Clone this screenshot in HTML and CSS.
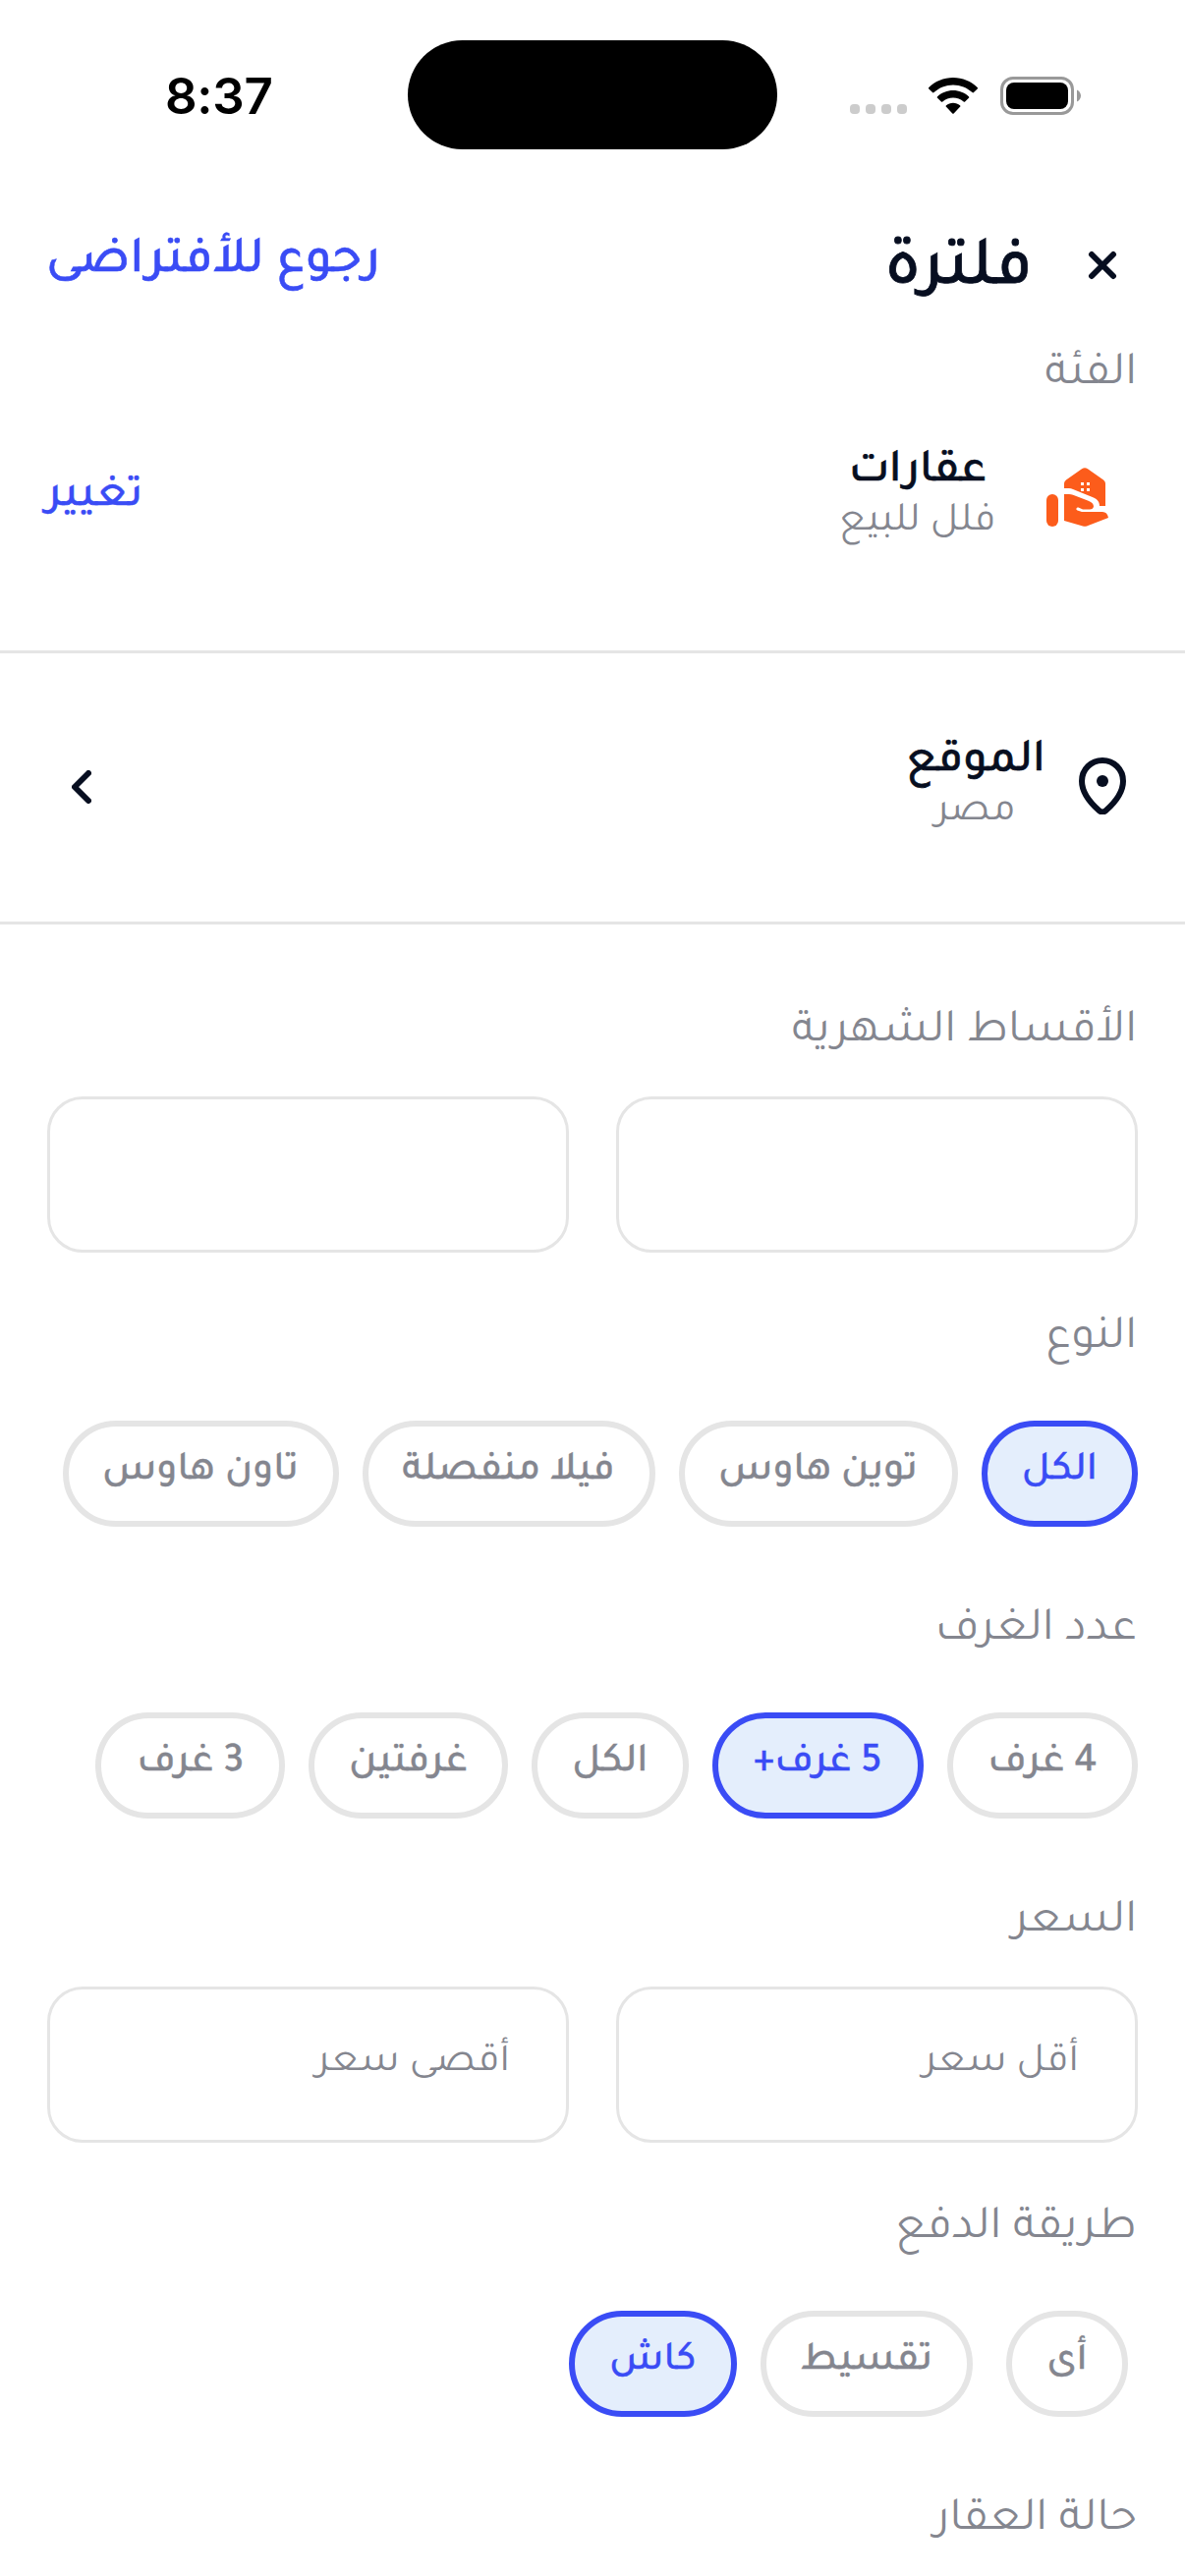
FILE: index.html
```html
<!DOCTYPE html>
<html lang="ar" dir="rtl">
<head>
<meta charset="utf-8">
<title>فلترة</title>
<link rel="stylesheet" href="styles.css">
</head>
<body>
<header class="status" dir="ltr">
  <div class="time">8:37</div>
  <div class="island"></div>
  <div class="indicators">
    <svg class="dots" width="58" height="10" viewBox="0 0 58 10" fill="#cccccc"><rect width="10" height="10" rx="4"/><rect x="16" width="10" height="10" rx="4"/><rect x="32" width="10" height="10" rx="4"/><rect x="48" width="10" height="10" rx="4"/></svg>
    <svg class="wifi" width="50" height="37" viewBox="0 0 50 37"><path d="M25 0C34.600 0 43.400 3.700 49.700 10a1 1 0 0 1 0 1.400L46 15.100a1 1 0 0 1-1.500 0C39.300 10.200 32.500 7.400 25 7.400S10.700 10.200 5.500 15.100a1 1 0 0 1-1.500 0L.300 11.400a1 1 0 0 1 0-1.400C6.600 3.700 15.400 0 25 0zM25 13c6 0 11.600 2.300 15.900 6.200a1 1 0 0 1 0 1.500l-3.800 3.800a1 1 0 0 1-1.400 0C32.800 21.900 29.100 20.400 25 20.400s-7.800 1.500-10.700 4.100a1 1 0 0 1-1.400 0l-3.800-3.800a1 1 0 0 1 0-1.500C13.400 15.300 19 13 25 13zM25 25.700c2.700 0 5.100 1 7 2.600a1 1 0 0 1 0 1.500l-6.300 6.600a1 1 0 0 1-1.400 0L18 29.800a1 1 0 0 1 0-1.500c1.900-1.600 4.300-2.600 7-2.600z"/></svg>
    <svg class="battery" width="82" height="39" viewBox="0 0 82 39"><rect x="1.500" y="1.500" width="72" height="36" rx="11.500" fill="none" stroke="#999" stroke-width="3"/><rect x="6" y="6" width="63" height="27" rx="8"/><path d="M78 13.500c2.500 1.200 4 3.500 4 6s-1.500 4.800-4 6z" fill="#999"/></svg>
  </div>
</header>

<div class="titlebar">
  <svg class="close" width="30" height="30" viewBox="0 0 30 30"><path d="M4 4l22 22M26 4L4 26"/></svg>
  <h1 class="title">فلترة</h1>
  <a class="reset">رجوع للأفتراضى</a>
</div>

<section class="category">
  <h2 class="label">الفئة</h2>
  <div class="category-row">
    <svg class="house" width="63" height="61" viewBox="0 0 63 61"><rect x="0" y="27" width="12" height="33" rx="6"/><path d="M18 54V27h5q2 0 4 .7L42 33.500Q48 35.500 48 39.500 47.500 42.500 44 42.500H37l-4.500-2q-1.500-.5-2 1t1 2L36 45H57q5 0 6 6L41 59.500q-2 .7-4 0z"/><path fill-rule="evenodd" d="M18 21V16q0-2 2-3.500L36 1.200q3-1.800 6 0L58 12.500Q60 14 60 16V39H54q0-6-6-8.500L27 22q-2-1-4-1zM35 15v3h3v-3zm6 0v3h3v-3zm-6 6v3h3v-3zm6 0v3h3v-3z"/></svg>
    <div class="names cat-names"><div class="name">عقارات</div><div class="sub">فلل للبيع</div></div>
    <a class="change">تغيير</a>
  </div>
</section>

<section class="location">
  <svg class="pin" width="48" height="58" viewBox="0 0 48 58"><path d="M24 3C12.500 3 3 12 3 24c0 12 9 22.500 17.500 30Q24 57 27.500 54C36 46.500 45 36 45 24 45 12 35.500 3 24 3z"/><circle cx="24" cy="24" r="6"/></svg>
  <div class="names loc-names"><div class="name">الموقع</div><div class="sub">مصر</div></div>
  <svg class="chevron" width="20" height="34" viewBox="0 0 20 34"><path d="M17 3L3 17l14 14"/></svg>
</section>

<main>
  <section class="field">
    <h2 class="label">الأقساط الشهرية</h2>
    <div class="inputs"><div class="input"></div><div class="input"></div></div>
  </section>
  <section class="field">
    <h2 class="label">النوع</h2>
    <div class="chips">
      <div class="chip on w-all">الكل</div><div class="chip w-twin">توين هاوس</div><div class="chip w-villa">فيلا منفصلة</div><div class="chip w-town">تاون هاوس</div>
    </div>
  </section>
  <section class="field">
    <h2 class="label">عدد الغرف</h2>
    <div class="chips">
      <div class="chip w-four">4 غرف</div><div class="chip on w-five">5 غرف+</div><div class="chip w-all">الكل</div><div class="chip w-two">غرفتين</div><div class="chip w-three">3 غرف</div>
    </div>
  </section>
  <section class="field">
    <h2 class="label">السعر</h2>
    <div class="inputs"><div class="input">أقل سعر</div><div class="input">أقصى سعر</div></div>
  </section>
  <section class="field">
    <h2 class="label">طريقة الدفع</h2>
    <div class="chips">
      <div class="chip w-any">أى</div><div class="chip w-inst">تقسيط</div><div class="chip on w-cash">كاش</div>
    </div>
  </section>
  <section class="field">
    <h2 class="label">حالة العقار</h2>
  </section>
</main>
</body>
</html>
```
FILE: styles.css
```css
* { box-sizing: border-box; }
body { margin: 0; width: 1206px; height: 2622px; overflow: hidden; background: #fff; color: #070e20; font-family: Tajawal, "Noto Kufi Arabic", "DejaVu Sans", sans-serif; }
h1, h2 { margin: 0; font-weight: 400; }
svg { display: block; flex: none; }
.status { height: 192px; display: flex; align-items: flex-start; }
.time { width: 415px; padding: 68px 0 0 168px; font: 600 51px/60px Inter, sans-serif; color: #000; letter-spacing: -0.3px; }
.island { width: 376px; height: 111px; margin-top: 41px; border-radius: 56px; background: #000; }
.indicators { display: flex; padding: 78px 0 0 74px; }
.dots { margin-top: 28px; }
.wifi { margin: 1px 23px 0 22px; }

.titlebar { height: 154px; display: flex; padding: 0 69px 0 47px; }
.close { margin-top: 63px; fill: none; stroke: #070e20; stroke-width: 6; stroke-linecap: round; }
.title { margin-right: 56px; font-size: 70.5px; font-weight: 500; line-height: 80px; padding-top: 46px; -webkit-text-stroke: 0.8px; }
.reset { margin-right: auto; font-size: 52.8px; font-weight: 500; line-height: 60px; padding-top: 47px; color: #3a4cf5; -webkit-text-stroke: 0.6px; }

.label { height: 60px; font-size: 48px; line-height: 74px; color: #84868f; white-space: nowrap; }
.category { height: 319px; padding: 0 49px 0 0; border-bottom: 3px solid #e5e5e5; }
.category-row { display: flex; padding: 70px 29px 0 47px; }
.house { fill: #fc5c1b; }
.names { text-align: center; white-space: nowrap; margin-top: -19px; }
.cat-names { width: 160px; margin-right: 51px; }
.name { font-size: 47.6px; font-weight: 500; line-height: 50px; -webkit-text-stroke: 0.7px; }
.sub { font-size: 42px; line-height: 53px; color: #84868f; }
.change { margin: 2px auto 0 0; font-size: 47.2px; font-weight: 500; line-height: 60px; color: #3a4cf5; -webkit-text-stroke: 0.4px; }

.location { height: 276px; display: flex; padding: 106px 60px 0 73px; border-bottom: 3px solid #e5e5e5; }
.pin { fill: none; stroke: #070e20; stroke-width: 6; }
.pin circle { fill: #070e20; stroke: none; }
.loc-names { width: 142px; margin-right: 34px; }
.chevron { margin: 13px auto 0 0; fill: none; stroke: #070e20; stroke-width: 6; stroke-linecap: round; stroke-linejoin: round; }

main { padding: 74px 48px 0; }
.field { padding-right: 1px; }
.inputs { display: flex; gap: 48px; margin: 41px -1px 52px 0; }
.input { width: 531px; height: 159px; border: 3px solid #e5e5e5; border-radius: 36px; padding: 46px 57px 0; font-size: 42px; line-height: 60px; color: #84868f; }
.chips { display: flex; gap: 24px; margin: 59px -1px 70px 0; }
.chip { height: 108px; flex: none; border: 6px solid #e5e5e5; border-radius: 54px; font-size: 41.6px; font-weight: 500; line-height: 94px; text-align: center; color: #84868f; white-space: nowrap; -webkit-text-stroke: 0.4px; }
.chip.on { border-color: #3a4cf5; background: #e4eefc; color: #3a4cf5; }
.w-all { width: 159.5px; }
.w-twin { width: 284px; }
.w-villa { width: 298px; }
.w-town { width: 281px; }
.w-four { width: 194.5px; }
.w-five { width: 215px; }
.w-two { width: 203px; }
.w-three { width: 193px; }
.w-any { width: 124px; margin: 0 10px; }
.w-inst { width: 216px; }
.w-cash { width: 171.5px; }
```
